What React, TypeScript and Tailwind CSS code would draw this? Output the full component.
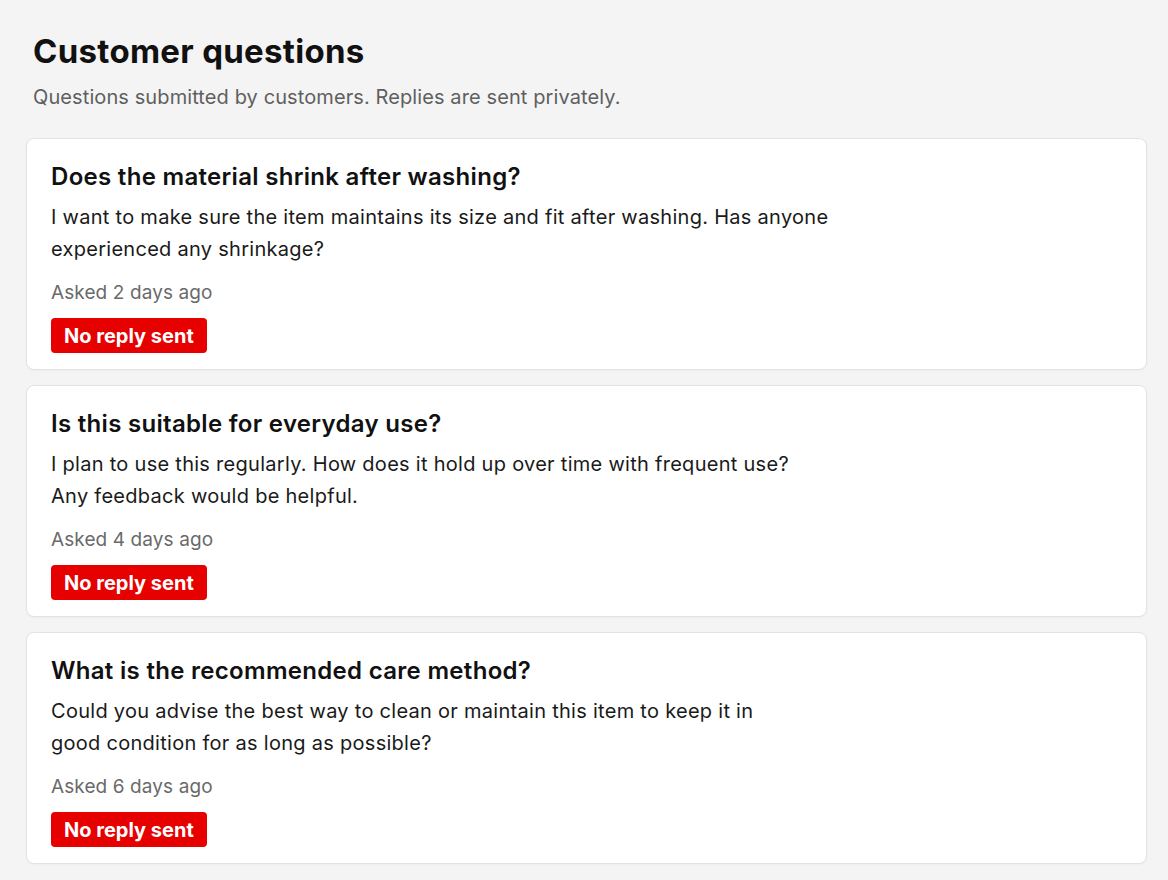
const questions = [
  {
    id: 1,
    title: 'Does the material shrink after washing?',
    lines: ['I want to make sure the item maintains its size and fit after washing. Has anyone', 'experienced any shrinkage?'],
    asked: 'Asked 2 days ago',
  },
  {
    id: 2,
    title: 'Is this suitable for everyday use?',
    lines: ['I plan to use this regularly. How does it hold up over time with frequent use?', 'Any feedback would be helpful.'],
    asked: 'Asked 4 days ago',
  },
  {
    id: 3,
    title: 'What is the recommended care method?',
    lines: ['Could you advise the best way to clean or maintain this item to keep it in', 'good condition for as long as possible?'],
    asked: 'Asked 6 days ago',
  },
];

export default function App() {
  return (
    <div className="min-h-[880px] bg-[#f4f4f4] pl-[26px] pr-[21px] pt-[31px] pb-4 font-['Inter','Liberation_Sans',sans-serif] text-[#111]">
      {/* Header */}
      <div className="pl-[7px] mb-[27px]">
        <h1 className="text-[33px] leading-[40px] font-bold tracking-[0.3px] text-[#111]">Customer questions</h1>
        <p className="mt-[12px] text-[20px] leading-[28px] tracking-[0.1px] text-[#5f5f5f]">
          Questions submitted by customers. Replies are sent privately.
        </p>
      </div>

      {/* Question cards */}
      <div className="flex flex-col gap-[15px]">
        {questions.map((q) => (
          <div
            key={q.id}
            className="bg-white border border-[#e2e2e2] rounded-[8px] pt-[23px] px-[24px] pb-[16px] shadow-[0_1px_2px_rgba(0,0,0,0.03)]"
          >
            <h3 className="text-[24px] leading-[30px] font-semibold tracking-[0.3px] text-[#111]">{q.title}</h3>
            <p className="mt-[9px] text-[20px] leading-[32px] tracking-[0.28px] text-[#1a1a1a]">
              {q.lines[0]}
              <br />
              {q.lines[1]}
            </p>
            <div className="mt-[13px] text-[19px] leading-[30px] tracking-[0.1px] text-[#6a6a6a]">{q.asked}</div>
            <span className="mt-[10px] inline-flex items-center h-[35px] px-[13px] rounded-[4px] bg-[#e60000] text-white text-[20px] font-bold">
              No reply sent
            </span>
          </div>
        ))}
      </div>
    </div>
  );
}
